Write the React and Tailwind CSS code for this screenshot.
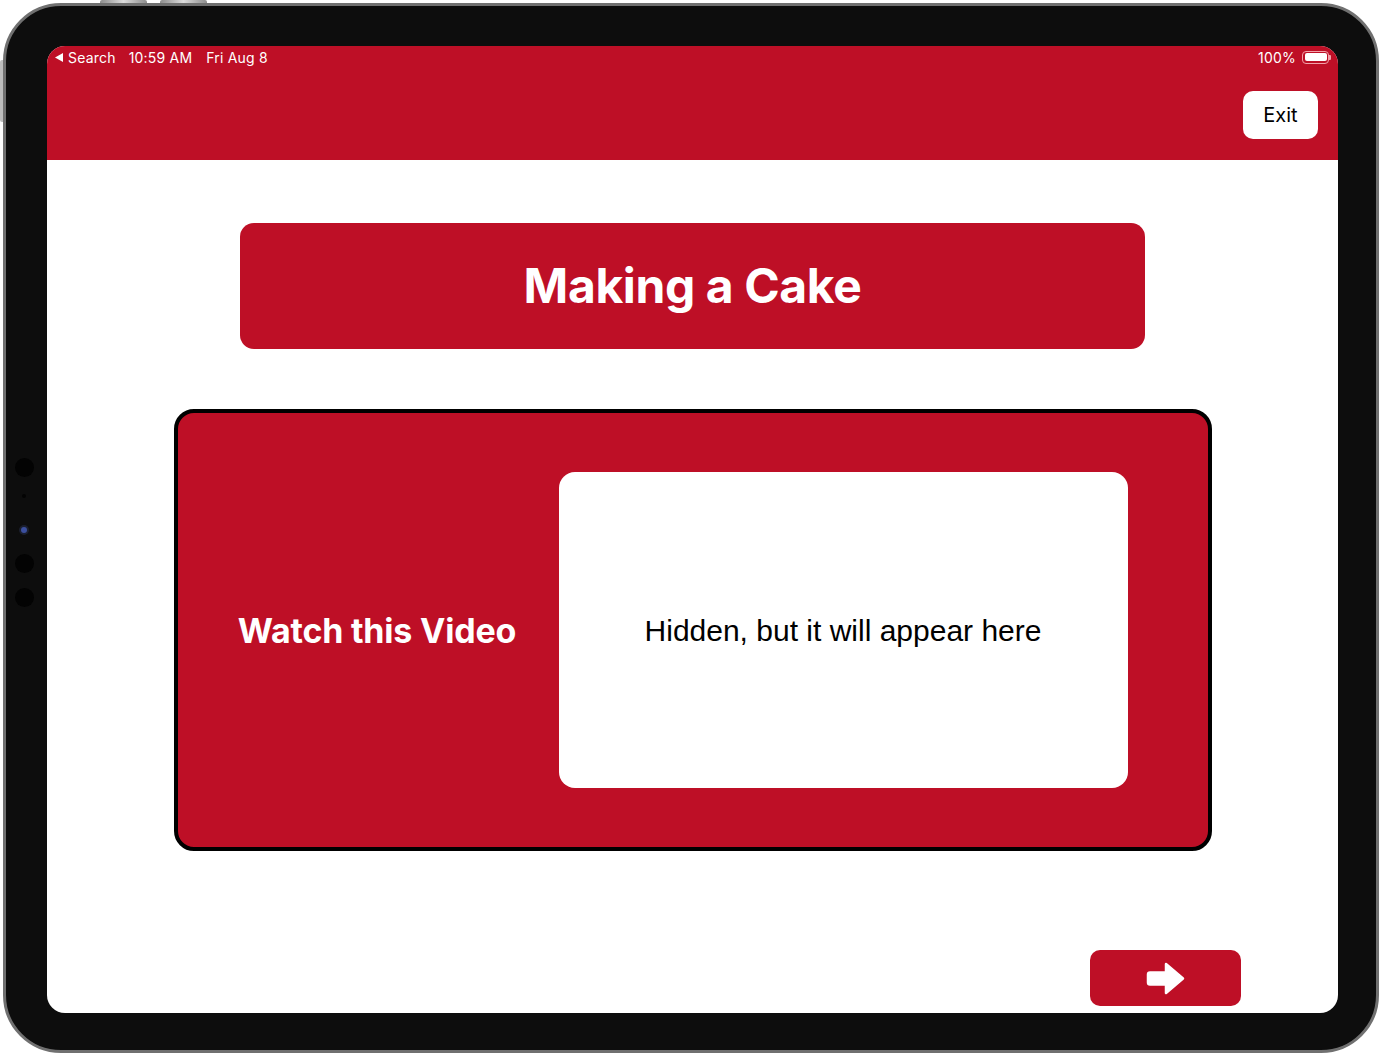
export default function App() {
  const red = "bg-[#be0f26]";

  return (
    <div className="w-[1381px] h-[1057px] bg-white overflow-hidden flex flex-col font-['Inter',sans-serif]">
      {/* top hardware buttons */}
      <div className="h-[3px] flex pl-[100px] gap-[13px]">
        <div className="w-[47px] h-[3px] rounded-t-[2px] bg-gradient-to-r from-[#8e8e8e] via-[#dcdcdc] to-[#8e8e8e]" />
        <div className="w-[47px] h-[3px] rounded-t-[2px] bg-gradient-to-r from-[#8e8e8e] via-[#dcdcdc] to-[#8e8e8e]" />
      </div>

      <div className="flex">
        {/* side button */}
        <div className="w-[3px]">
          <div className="mt-[57px] h-[62px] w-[3px] rounded-l-[2px] bg-[#bdbdbd]" />
        </div>

        {/* device */}
        <div className="w-[1376px] h-[1050px] rounded-[58px] border-[3px] border-[#707070] bg-[#0d0d0d] flex pt-[40px]">
          {/* left bezel with cameras */}
          <div className="w-[41px] h-[967px] flex flex-col items-center justify-center pr-[5px] pt-[5px]">
            <div className="w-[19px] h-[19px] rounded-full bg-[#030303]" />
            <div className="mt-[17px] w-[4px] h-[4px] rounded-full bg-[#030303]" />
            <div className="mt-[27px] w-[10px] h-[10px] rounded-full bg-[#1b1f2e] flex items-center justify-center">
              <div className="w-[6px] h-[6px] rounded-full bg-[#3b4f9e]" />
            </div>
            <div className="mt-[19px] w-[19px] h-[19px] rounded-full bg-[#030303]" />
            <div className="mt-[15px] w-[19px] h-[19px] rounded-full bg-[#030303]" />
          </div>

          {/* screen */}
          <div className="w-[1291px] h-[967px] rounded-[18px] overflow-hidden bg-white flex flex-col">
            <div className={`${red} h-[114px] flex flex-col`}>
              <div className="h-[22px] flex items-center justify-between pl-[8px] pr-[7px] text-white text-[14px] tracking-[0.2px]">
                <div className="flex items-center">
                  <svg width="8" height="9" viewBox="0 0 8 9" className="mr-[5px]">
                    <path d="M0 4.5 L8 0 L8 9 Z" fill="white" />
                  </svg>
                  <span>Search</span>
                  <span className="ml-[13px]">10:59 AM</span>
                  <span className="ml-[14px]">Fri Aug 8</span>
                </div>
                <div className="flex items-center">
                  <span>100%</span>
                  <div className="ml-[6px] w-[27px] h-[13px] rounded-[4px] border border-[#f2a0a8] p-[1.5px]">
                    <div className="w-full h-full rounded-[2px] bg-white" />
                  </div>
                  <div className="w-[2px] h-[5px] rounded-r-[1px] bg-[#f2a0a8]" />
                </div>
              </div>
              <div className="mt-[23px] flex justify-end pr-[20px]">
                <button className="w-[75px] h-[48px] rounded-[10px] bg-white text-[20px] text-black flex items-center justify-center">
                  Exit
                </button>
              </div>
            </div>

            <div className="flex-1 flex flex-col items-center">
              <div className={`${red} mt-[63px] w-[905px] h-[126px] rounded-[14px] flex items-center justify-center`}>
                <h1 className="text-white font-bold text-[48px] tracking-[-0.4px]">Making a Cake</h1>
              </div>

              <div className={`${red} mt-[60px] w-[1038px] h-[442px] rounded-[20px] border-4 border-black flex items-center`}>
                <div className="w-[381px] pl-[18px] text-center text-white font-bold text-[34px] tracking-[-0.2px]">
                  Watch this Video
                </div>
                <div className="w-[569px] h-[316px] rounded-[16px] bg-white flex items-center justify-center">
                  <p className="text-black text-[30px] font-['Liberation_Sans',sans-serif]">
                    Hidden, but it will appear here
                  </p>
                </div>
              </div>

              <div className="mt-auto w-full flex justify-end pr-[97px] pb-[7px]">
                <button className={`${red} w-[151px] h-[56px] rounded-[10px] flex items-center justify-center`}>
                  <svg width="39" height="33" viewBox="0 0 39 33">
                    <path
                      d="M4 10.5 H20 V2 L37 16.5 L20 31 V22.5 H4 Q2 22.5 2 20.5 V12.5 Q2 10.5 4 10.5 Z"
                      fill="white"
                      stroke="white"
                      strokeWidth="2.5"
                      strokeLinejoin="round"
                    />
                  </svg>
                </button>
              </div>
            </div>
          </div>
        </div>
      </div>
    </div>
  );
}
